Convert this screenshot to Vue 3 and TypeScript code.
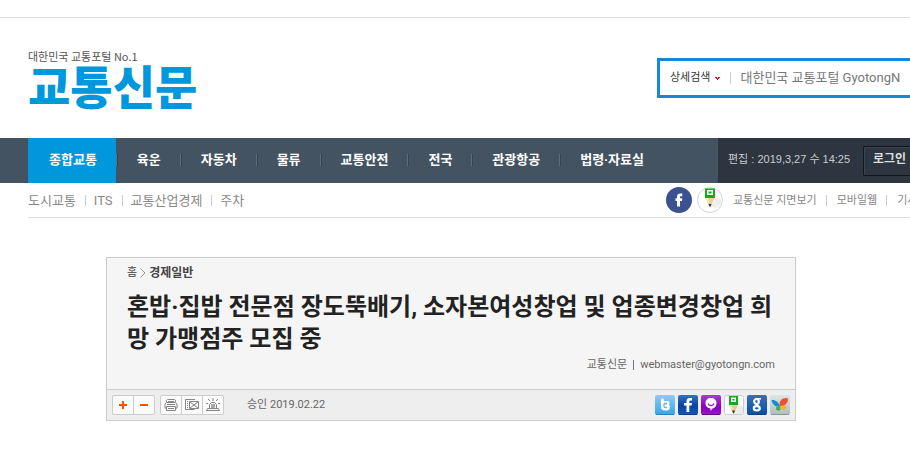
<script setup lang="ts">
import { ref } from 'vue'

interface MenuItem {
  label: string
  active?: boolean
}

const mainMenu: MenuItem[] = [
  { label: '종합교통', active: true },
  { label: '육운' },
  { label: '자동차' },
  { label: '물류' },
  { label: '교통안전' },
  { label: '전국' },
  { label: '관광항공' },
  { label: '법령·자료실' },
]
const subMenu: string[] = ['도시교통', 'ITS', '교통산업경제', '주차']
const serviceMenu: string[] = ['교통신문 지면보기', '모바일웹', '기사제보']
const keyword = ref<string>('')
</script>

<template>
  <div class="page">
    <header>
      <div class="masthead">
        <a class="brand" href="#">
          <span class="tagline">대한민국 교통포털 No.1</span>
          <span class="logo">교통신문</span>
        </a>
        <form class="search" @submit.prevent>
          <button class="advanced" type="button">
            상세검색
            <svg width="5" height="3" viewBox="0 0 5 3"><path d="M0 0h2v1h1V0h2v1H4v1H3v1H2V2H1V1H0z" fill="#b8232f" /></svg>
          </button>
          <input v-model="keyword" type="text" aria-label="검색어" placeholder="대한민국 교통포털 GyotongN" />
        </form>
      </div>

      <div class="navbar">
        <nav class="main-nav">
          <a v-for="item in mainMenu" :key="item.label" href="#" :class="{ active: item.active }">{{ item.label }}</a>
        </nav>
        <div class="status">
          <span class="edited">편집 : 2019,3,27 수 14:25</span>
          <button class="login" type="button">로그인</button>
        </div>
      </div>

      <div class="subbar">
        <nav class="links sub">
          <a v-for="label in subMenu" :key="label" href="#">{{ label }}</a>
        </nav>
        <div class="services">
          <a class="round" href="#" aria-label="Facebook">
            <svg width="26" height="26" viewBox="0 0 26 26">
              <circle cx="13" cy="13" r="13" fill="#3c5190" />
              <path d="M11 19.500V14H9.500v-2.800H11V10c0-2.400 1.200-3.500 3.300-3.500h2v2.700h-1.100c-.9 0-1.200.3-1.200 1v1h2.300L16 14h-2v5.500z" fill="#fff" />
            </svg>
          </a>
          <a class="round" href="#" aria-label="Naver">
            <svg width="26" height="26" viewBox="0 0 26 26">
              <circle cx="13" cy="13" r="12.500" fill="#fff" stroke="#d5d5d5" />
              <path d="M13 20l6-9 5.500 1.500A11.500 11.500 0 0 1 21 21z" fill="#eee" />
              <path d="M8 1.500h10V11H8z" fill="#12ad16" />
              <path d="M10 3h6v5h-6z" fill="#fff" />
              <path d="M11.500 4.500h3v2h-3z" fill="#12ad16" />
              <path d="M8.500 11h9L14 19h-2z" fill="#e9d3a0" />
              <path d="M8.500 11h3l1 7z" fill="#f6e8c6" />
              <path d="M11.500 17h3L13 20.500z" fill="#333" />
            </svg>
          </a>
          <nav class="links small">
            <a v-for="label in serviceMenu" :key="label" href="#">{{ label }}</a>
          </nav>
        </div>
      </div>
    </header>

    <main class="article">
      <div class="heading">
        <div class="crumbs">
          <a href="#">홈</a>
          <svg width="6" height="10" viewBox="0 0 6 10"><path d="M.5.500L5 5 .5 9.500" fill="none" stroke="#999" /></svg>
          <a class="current" href="#">경제일반</a>
        </div>
        <h1>혼밥·집밥 전문점 장도뚝배기, 소자본여성창업 및 업종변경창업 희망 가맹점주 모집 중</h1>
        <p class="byline">
          <span>교통신문</span><i></i><a href="#">webmaster@gyotongn.com</a>
        </p>
      </div>
      <div class="tools">
        <div class="group">
          <button type="button" aria-label="글자 크게">
            <svg width="20" height="18" viewBox="0 0 20 18"><path d="M6 8h3V5h2v3h3v2h-3v3H9v-3H6z" fill="#ff5200" /></svg>
          </button>
          <button type="button" aria-label="글자 작게">
            <svg width="20" height="18" viewBox="0 0 20 18"><path d="M6 8h8v2H6z" fill="#ff5200" /></svg>
          </button>
        </div>
        <div class="group">
          <button type="button" aria-label="인쇄">
            <svg width="20" height="18" viewBox="0 0 20 18" fill="none" stroke="#858585">
              <path d="M5.500 6V4.500l1-1h7l1 1V6M7 5.500h6M5.500 6.500h9l1.500 1.500v4l-1.500.5M5.500 6.500L4 8v4l1.500.5" />
              <path d="M6 8.500h8M5.500 10.500h9v4h-9zM7 12.500h6" />
            </svg>
          </button>
          <button type="button" aria-label="메일">
            <svg width="20" height="18" viewBox="0 0 20 18" fill="none" stroke="#858585">
              <path d="M13 3.500H3.500v10h9M5 5.500h1M5 7.500h1M5 9.500h1M5 11.500h1" />
              <path d="M7.500 5.500h9v7h-9zM8 6l8 6M16 6l-8 6" />
            </svg>
          </button>
          <button type="button" aria-label="신고">
            <svg width="20" height="18" viewBox="0 0 20 18" fill="none" stroke="#858585">
              <path d="M6.500 12V8.500l2-2h3l2 2V12M4.500 12.500h11l1 2h-13z" />
              <path d="M8 8h4v4H8z" fill="#aaa" stroke="none" />
              <path d="M10 2v3M5 3l2 2M15 3l-2 2M3 7.500h2M15 7.500h2" />
            </svg>
          </button>
        </div>
        <span class="approved">승인 2019.02.22</span>
        <div class="share">
          <a href="#" aria-label="Twitter">
            <svg width="20" height="20" viewBox="0 0 20 20">
              <defs><linearGradient id="tw" x2="0" y2="1"><stop stop-color="#8ccdf5" /><stop offset="1" stop-color="#36a3e8" /></linearGradient></defs>
              <rect width="20" height="20" rx="2" fill="url(#tw)" />
              <path d="M6 4.500C6 3 9 3 9 4.500V6h3.500c2 0 2.500 2 1.500 3.500 1.500 2.500 1 6-2 6H10c-2.800 0-4-1.500-4-4z" fill="#fff" />
              <path d="M9 8.500h3M9 8.500V11c0 1 .5 1.500 1.500 1.500H12" fill="none" stroke="#55b3ec" stroke-width="1.300" />
              <path d="M1 19.500h18" stroke="#2b83c4" />
            </svg>
          </a>
          <a href="#" aria-label="Facebook 공유">
            <svg width="20" height="20" viewBox="0 0 20 20">
              <defs><linearGradient id="fb" x2="0" y2="1"><stop stop-color="#3572c5" /><stop offset=".55" stop-color="#0b429f" /><stop offset="1" stop-color="#1259bd" /></linearGradient></defs>
              <rect width="20" height="20" rx="2" fill="url(#fb)" />
              <path d="M8.500 17v-6.500H6V8h2.500V6.500c0-2.500 1.200-3.500 3.500-3.500h2v2.500h-1.300c-1 0-1.400.4-1.400 1.300V8H14l-.4 2.500h-2.300V17z" fill="#fff" />
              <path d="M1 19.500h18" stroke="#10397e" />
            </svg>
          </a>
          <a href="#" aria-label="미투데이">
            <svg width="20" height="20" viewBox="0 0 20 20">
              <defs><linearGradient id="me" x2="0" y2="1"><stop stop-color="#aa3bd4" /><stop offset=".6" stop-color="#8800bd" /><stop offset="1" stop-color="#9b16c9" /></linearGradient></defs>
              <rect width="20" height="20" rx="2" fill="url(#me)" />
              <path d="M10 3c3.400 0 5.500 2 5.500 5.200s-2 4.800-4 5.300L9.500 16v-2.500c-3-.3-5-2.100-5-5.300S6.600 3 10 3z" fill="#fff" />
              <path d="M7 8.500c.8 2.700 5.200 2.700 6 0" fill="none" stroke="#9417c3" stroke-width="1.300" />
              <path d="M1 19.500h18" stroke="#650b88" />
            </svg>
          </a>
          <a href="#" aria-label="Naver 공유">
            <svg width="20" height="20" viewBox="0 0 20 20">
              <rect x=".5" y=".5" width="19" height="19" rx="2" fill="#fff" stroke="#ccc" />
              <path d="M10 18l6-8 3 2v7h-8z" fill="#ececec" />
              <path d="M5 1h9v9H5z" fill="#12ad16" />
              <path d="M7 2.500h5V7H7z" fill="#fff" />
              <path d="M8.500 4h2v1.500h-2z" fill="#12ad16" />
              <path d="M5 10h9l-3.500 8h-2z" fill="#e5cc96" />
              <path d="M5 10h3l1 7z" fill="#f6e8c6" />
              <path d="M8 15.500h3L9.500 19z" fill="#333" />
            </svg>
          </a>
          <a href="#" aria-label="Google">
            <svg width="20" height="20" viewBox="0 0 20 20">
              <defs><linearGradient id="gg" x2="0" y2="1"><stop stop-color="#396fb2" /><stop offset="1" stop-color="#0850a4" /></linearGradient></defs>
              <rect width="20" height="20" rx="2" fill="url(#gg)" />
              <g fill="none" stroke="#fff">
                <ellipse cx="9.500" cy="6.500" rx="2.300" ry="2.500" stroke-width="2.200" />
                <ellipse cx="9.800" cy="13.300" rx="3" ry="2.200" stroke-width="2.200" />
                <path d="M10 3.800h4M9.500 9l2 2.500" stroke-width="1.500" />
              </g>
              <path d="M1 19.500h18" stroke="#103e78" />
            </svg>
          </a>
          <a href="#" aria-label="MSN">
            <svg width="20" height="20" viewBox="0 0 20 20">
              <defs><linearGradient id="ms" x2="0" y2="1"><stop stop-color="#dfe5e6" /><stop offset="1" stop-color="#aebcbd" /></linearGradient></defs>
              <rect width="20" height="20" rx="2" fill="url(#ms)" />
              <path d="M10 11C8.500 6 12 2.500 17.500 3c1.500 3-1.500 8.500-7.500 8z" fill="#f0502c" />
              <path d="M10.500 11c3-.5 6-1 5.500 1.500-1 4-4.500 4-5.500-1.500z" fill="#f6b52d" />
              <path d="M10 11.500C9 7 5 4.500 1.500 5c.5 4 4 7.500 8.500 6.500z" fill="#168bd0" />
              <path d="M10 10.500C6.500 11 5 13 6.500 15c3.500 2 5 0 3.500-4.500z" fill="#46ae49" />
              <path d="M1 19.500h18" stroke="#899799" />
            </svg>
          </a>
        </div>
      </div>
    </main>
  </div>
</template>

<style>
body {
  margin: 0;
  background: #fff;
}
</style>

<style scoped>
.page {
  padding-top: 17px;
  overflow: hidden;
  font-family: Roboto, 'Noto Sans CJK KR', sans-serif;
  font-size: 13px;
  line-height: 20px;
  color: #888;
}
a {
  color: inherit;
  text-decoration: none;
  white-space: nowrap;
}
button {
  padding: 0;
  border: 0;
  background: none;
  font: inherit;
  color: inherit;
  white-space: nowrap;
}
svg {
  display: block;
}
.masthead {
  display: flex;
  justify-content: space-between;
  align-items: flex-start;
  height: 121px;
  box-sizing: border-box;
  padding: 30px 0 0 28px;
  border-top: 1px solid #ddd;
}
.brand {
  display: flex;
  flex-direction: column;
  font-family: 'Noto Sans CJK KR', sans-serif;
}
.tagline {
  font-size: 11px;
  line-height: 16px;
  color: #555;
}
.logo {
  font-size: 46px;
  font-weight: 900;
  line-height: 40px;
  color: #0097dc;
}
.search {
  display: flex;
  align-items: center;
  flex: 0 0 253px;
  box-sizing: border-box;
  height: 40px;
  margin-top: 10px;
  padding-left: 10px;
  border: 3px solid #1588dc;
  border-right: 0;
}
.advanced {
  display: flex;
  align-items: center;
  gap: 5px;
  padding-right: 10px;
  border-right: 1px solid #ccc;
  font-size: 11px;
  line-height: 12px;
  color: #333;
}
.search input {
  flex: 1;
  min-width: 0;
  padding: 0 0 0 9px;
  border: 0;
  outline: 0;
  background: none;
  font: inherit;
  color: #555;
}
.search input::placeholder {
  color: #777;
  opacity: 1;
}
.navbar {
  display: flex;
  height: 45px;
  background: #445362;
}
.main-nav {
  display: flex;
  flex: 1;
  padding-left: 28px;
}
.main-nav a {
  padding: 0 19px 0 21px;
  font-weight: 700;
  line-height: 43px;
  color: #fff;
  background: linear-gradient(90deg, #5f6e7b 50%, #36434f 50%) 0 16px / 2px 12px no-repeat;
}
.main-nav a.active {
  background: #0097dc;
}
.status {
  display: flex;
  align-items: center;
  flex: 0 0 192px;
  box-sizing: border-box;
  justify-content: space-between;
  padding-left: 10px;
  background: #2d3540;
  font-family: 'Liberation Sans', 'Noto Sans CJK KR', sans-serif;
  font-size: 11px;
  color: #ccc;
  overflow: hidden;
}
.edited {
  padding-bottom: 4px;
  white-space: nowrap;
}
.login {
  height: 30px;
  padding: 0 4px 4px 9px;
  border: 1px solid #11161c;
  border-right: 0;
  border-radius: 2px 0 0 2px;
  box-shadow: inset 1px 1px 0 #3d4650;
  font-size: 12px;
  font-weight: 700;
  color: #ddd;
}
.subbar {
  display: flex;
  justify-content: space-between;
  height: 34px;
  margin-left: 28px;
  border-bottom: 1px solid #ddd;
}
.links {
  display: flex;
  align-items: center;
}
.links a {
  padding: 0 9px 0 8px;
  border-left: 1px solid #ccc;
  line-height: 11px;
}
.links a:first-child {
  padding-left: 0;
  border-left: 0;
}
.small {
  margin-left: 5px;
  font-size: 11px;
}
.small a {
  padding: 0 9px 0 10px;
}
.services {
  display: flex;
  align-items: center;
  gap: 5px;
  flex: 0 0 244px;
  overflow: hidden;
}
.article {
  max-width: 688px;
  margin: 39px auto 35px 106px;
  border: 1px solid #ccc;
}
.heading {
  padding: 5px 20px 17px;
  background: #f5f5f5;
}
.crumbs {
  display: flex;
  align-items: center;
  gap: 3px;
  font-size: 11px;
  color: #444;
}
.crumbs .current {
  font-size: 12px;
  font-weight: 700;
}
h1 {
  margin: 8px 0 2px;
  font-size: 24px;
  font-weight: 700;
  line-height: 32px;
  color: #222;
  word-break: break-all;
}
.byline {
  display: flex;
  align-items: center;
  justify-content: flex-end;
  gap: 6px;
  margin: 0;
  font-size: 11px;
  line-height: 15px;
  color: #666;
}
.byline i {
  width: 1px;
  height: 10px;
  background: #777;
}
.tools {
  display: flex;
  align-items: center;
  height: 30px;
  padding: 0 5px;
  border-top: 1px solid #ccc;
  background: #eee;
}
.group {
  display: flex;
  margin-right: 5px;
  border: 1px solid #ccc;
  border-radius: 2px;
  background: #fbfbfb;
}
.group button + button {
  border-left: 1px solid #ccc;
}
.approved {
  margin-left: 18px;
  font-size: 11px;
  color: #666;
}
.share {
  display: flex;
  gap: 3px;
  margin-left: auto;
}
</style>
